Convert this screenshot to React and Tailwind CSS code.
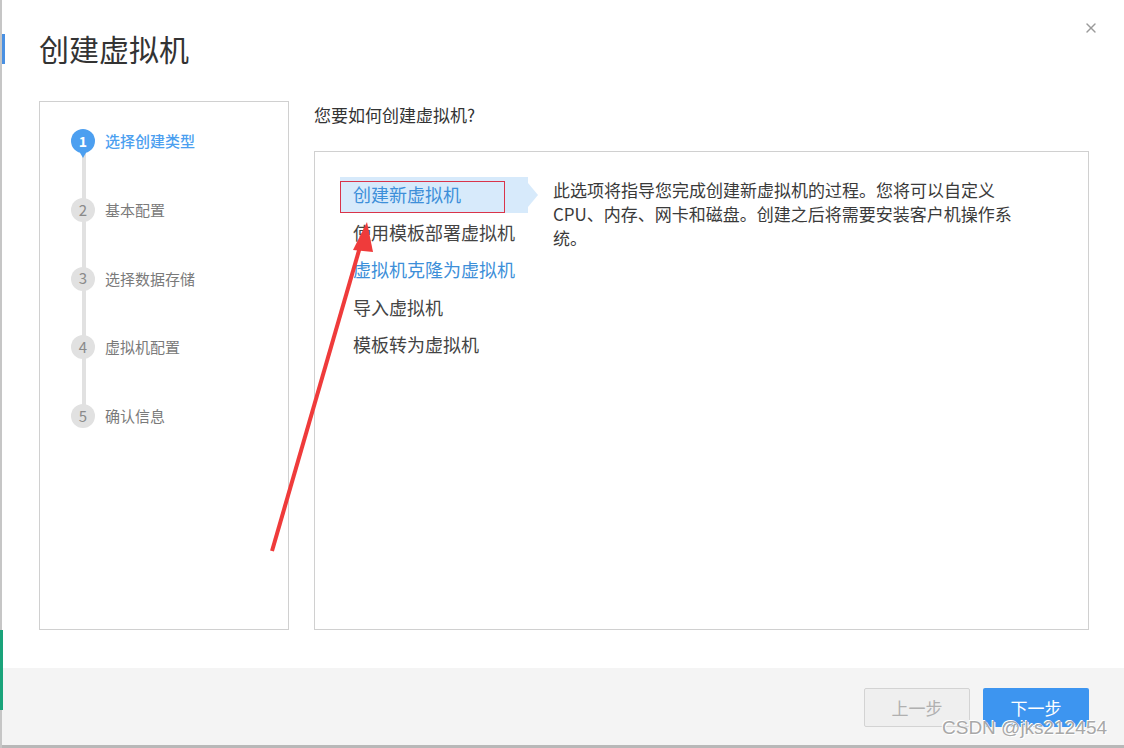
import { X } from 'lucide-react';

const steps = [
  { n: 1, label: '选择创建类型', active: true },
  { n: 2, label: '基本配置' },
  { n: 3, label: '选择数据存储' },
  { n: 4, label: '虚拟机配置' },
  { n: 5, label: '确认信息' },
];

const options = [
  { label: '创建新虚拟机', selected: true },
  { label: '使用模板部署虚拟机' },
  { label: '虚拟机克隆为虚拟机', hover: true },
  { label: '导入虚拟机' },
  { label: '模板转为虚拟机' },
];

const font = { fontFamily: '"Microsoft YaHei", "Noto Sans CJK SC", sans-serif' };

function StepMarker({ n, active }) {
  if (active) {
    return (
      <div className="relative flex h-6 w-6 items-center justify-center">
        <div className="absolute left-1/2 top-[15px] h-0 w-0 -translate-x-1/2 border-x-[8px] border-t-[14px] border-x-transparent border-t-[#4c9ff0]" />
        <div className="relative flex h-6 w-6 items-center justify-center rounded-full bg-[#4c9ff0] text-[14px] font-bold text-white">{n}</div>
      </div>
    );
  }
  return (
    <div className="flex h-6 w-6 items-center justify-center rounded-full bg-[#e1e1e1] text-[15px] text-[#8a8a8a]">{n}</div>
  );
}

function Steps() {
  return (
    <div className="relative w-[250px] shrink-0 border border-[#d0d0d0] bg-white pl-[31px] pt-[27px]">
      <div className="absolute left-[42px] top-[44px] h-[276px] w-1 bg-[#e1e1e1]" />
      <div className="relative flex flex-col">
        {steps.map(s => (
          <div key={s.n} className="flex h-[68.75px] items-start gap-[10px]">
            <StepMarker n={s.n} active={s.active} />
            <span className={`text-[15px] leading-6 ${s.active ? 'font-medium text-[#4c9ff0]' : 'text-[#7a7a7a]'}`}>{s.label}</span>
          </div>
        ))}
      </div>
    </div>
  );
}

function Options() {
  return (
    <div className="flex flex-1 border border-[#d0d0d0] bg-white pl-[25px] pt-[24px]">
      <div className="flex w-[198px] shrink-0 flex-col">
        {options.map(o => (
          <div key={o.label} className="relative flex h-[37.5px] items-center">
            {o.selected && (
              <>
                <div className="absolute inset-y-[0.5px] left-0 w-[188px] bg-[#d7eafb]" />
                <div className="absolute left-[188px] top-1/2 h-0 w-0 -translate-y-1/2 border-y-[12px] border-l-[10px] border-y-transparent border-l-[#d7eafb]" />
              </>
            )}
            <span className={`relative pl-[13px] text-[18px] ${o.selected || o.hover ? 'text-[#3d8fd9]' : 'text-[#444]'}`}>{o.label}</span>
          </div>
        ))}
      </div>
      <p className="ml-[15px] w-[474px] pt-[2px] text-[17px] leading-6 text-[#3a3a3a]">
        此选项将指导您完成创建新虚拟机的过程。您将可以自定义CPU、内存、网卡和磁盘。创建之后将需要安装客户机操作系统。
      </p>
    </div>
  );
}

export default function App() {
  return (
    <div className="relative h-[748px] w-[1124px] overflow-hidden bg-white" style={font}>
      {/* window edge behind the dialog */}
      <div className="absolute left-0 top-0 h-full w-[2px] bg-[#c6c6c6]" />
      <div className="absolute left-[2px] top-[34px] h-[30px] w-[3px] bg-[#4a90e2]" />
      <div className="absolute left-0 top-[630px] h-[80px] w-[3px] bg-[#1aa37a]" />

      <div className="flex h-full flex-col border-b-[3px] border-[#b8b8b8] pl-[39px]">
        <div className="flex items-start justify-between pt-[30px] pr-[25px]">
          <h1 className="text-[30px] font-normal leading-9 text-[#333]">创建虚拟机</h1>
          <X size={16} strokeWidth={2} className="mt-[-10px] text-[#9a9a9a]" />
        </div>

        <div className="mt-[35px] flex h-[529px] gap-[25px] pr-[35px]">
          <Steps />
          <div className="flex flex-1 flex-col">
            <div className="h-[50px] pt-[2px] text-[17px] leading-6 text-[#333]">您要如何创建虚拟机?</div>
            <Options />
          </div>
        </div>

        <div className="mt-auto -ml-[37px] flex h-[77px] justify-end gap-[13px] bg-[#f4f4f4] pr-[35px] pt-[20px]">
          <button className="h-[39px] w-[106px] rounded-[2px] border border-[#d3d3d3] bg-[#efefef] text-[17px] text-[#b0b0b0]">上一步</button>
          <button className="h-[39px] w-[106px] rounded-[2px] bg-[#3d95f0] text-[17px] text-white">下一步</button>
        </div>
      </div>

      {/* selection annotation */}
      <div className="absolute left-[340px] top-[181px] h-[32px] w-[165px] border border-[#d9344a]" />
      <svg className="pointer-events-none absolute left-0 top-0" width="1124" height="748">
        <line x1="272" y1="551" x2="362" y2="240" stroke="#ef3b3b" strokeWidth="4" />
        <polygon points="367,222 353,250 373,252" fill="#ef3b3b" />
      </svg>

      {/* watermark */}
      <div
        className="absolute left-[942px] top-[716px] text-[19px] leading-6 text-[#a8a8a8]"
        style={{ fontFamily: '"Liberation Sans", Arial, sans-serif', textShadow: '1px 1px 0 #fff, -1px -1px 0 #fff' }}
      >
        CSDN @jks212454
      </div>
    </div>
  );
}
